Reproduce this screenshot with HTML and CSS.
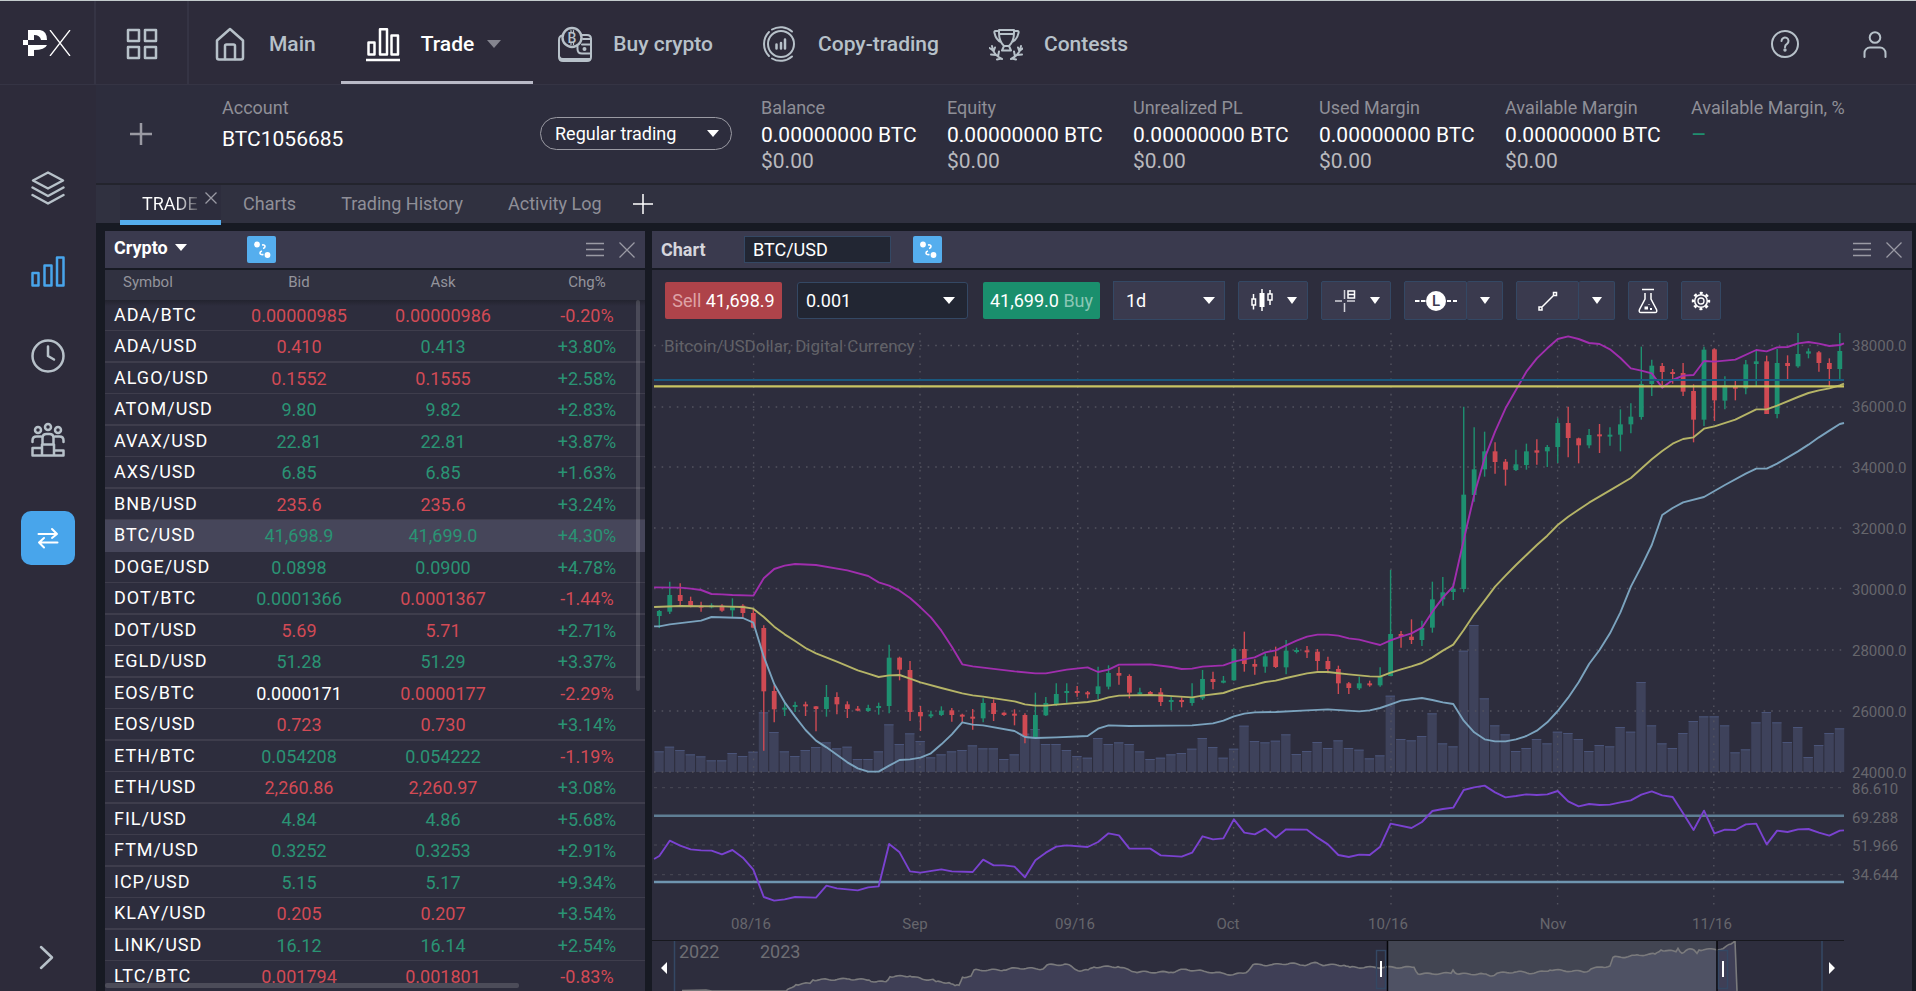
FILE: index.html
```html
<!DOCTYPE html>
<html lang="en">
<head>
<meta charset="utf-8">
<title>BTC/USD – Trade</title>
<link rel="stylesheet" href="styles.css">
</head>
<body>
<header class="topbar">
  <a class="logo" href="#" aria-label="PX home">
    <svg width="48" height="26" viewBox="0 0 48 26"><g fill="#fff"><path d="M5 0H17Q24 1 24 10H18Q17 5 11 5V10H5Z"/><path d="M0 10H5V15H0Z"/><path d="M5 15H24Q22 20 11 20V26H5Z"/></g><path d="M27 0L47 26M47 0L27 26" stroke="#fff" stroke-width="1.3"/></svg>
  </a>
  <button class="apps" aria-label="Applications">
    <svg width="32" height="32" viewBox="0 0 32 32" class="line thick"><path d="M2 2h11v11H2zM19 2h11v11H19zM2 19h11v11H2zM19 19h11v11H19z"/></svg>
  </button>
  <nav class="mainnav">
    <a href="#"><svg width="34" height="36" viewBox="0 0 34 36" class="line thick"><path d="M3 14.500L16 3l13 11.500V31.500a2 2 0 0 1-2 2H5a2 2 0 0 1-2-2Z"/><path d="M11 33V20a1.500 1.500 0 0 1 1.500-1.500h7a1.500 1.500 0 0 1 1.500 1.500v13"/></svg>Main</a>
    <a href="#" class="active"><svg width="34" height="36" viewBox="0 0 34 36" class="line thick"><path d="M2.500 16.500h6v12h-6zM14 3.200h7v25.300h-7zM25.500 9.500h6.500v19h-6.500zM0 34h34"/></svg>Trade<i class="caret big"></i></a>
    <a href="#"><svg width="34" height="36" viewBox="0 0 34 36" class="line"><path d="M4.500 9.500Q1 10 1 14V31q0 4 4 4H29q4 0 4-4V13q0-4-4-4H23M1.500 31q.5 2 3.500 2H32.500"/><path d="M33 27.500H24q-4.500 0-4.500-4.500V20.500M24 18.500H33M25 13H33"/><circle cx="26.500" cy="23" r="1" fill="currentColor"/><circle cx="14" cy="11.500" r="9.500" fill="#2d2b3a" stroke-width="2.400"/><text x="9.500" y="16.500" class="coin">B</text><path d="M13 4.500v2M15.500 4.500v2M13 16.500v2M15.500 16.500v2" stroke-width="1.200"/></svg>Buy crypto</a>
    <a href="#"><svg width="34" height="38" viewBox="0 0 34 38" class="line"><circle cx="18" cy="19" r="13"/><path d="M9 4.500A17 17 0 0 1 29 6.500M29 31.500A17 17 0 0 1 9 33.500M6 7a17 17 0 0 0 0 24"/><path d="M13.500 19.500v4M18 18v5.500M22 14.500v9" stroke-width="2.500"/></svg>Copy-trading</a>
    <a href="#"><svg width="34" height="36" viewBox="0 0 34 36" class="line"><path d="M10 4H25V7q0 8-5 13H15q-5-5-5-13ZM10 8H25M10 5H6.500Q5 5 5.500 7Q7 14 12 16M25 5H28.500Q30 5 29.500 7Q28 14 23 16M15 20l-2 4.500H22l-2-4.500"/><path d="M3 20Q4 29 13 33M32 20Q31 29 22 33M0.500 22l3.500 2.500M6 21.500l-1.500 4M2 28.500l5 .500M10 25.500l-1 5M8 33.500l4-1M34.500 22L31 24.500M29 21.500l1.500 4M33 28.500l-5 .500M25 25.500l1 5M27 33.500l-4-1"/></svg>Contests</a>
  </nav>
  <div class="toolsright">
    <button aria-label="Help"><svg width="30" height="30" viewBox="0 0 30 30" class="line"><circle cx="15" cy="15" r="13"/><path d="M11.500 12a3.500 3.500 0 1 1 5.500 2.900q-2 1.300-2 3.300"/><circle cx="15" cy="21" r=".7" fill="currentColor"/></svg></button>
    <button aria-label="Profile"><svg width="30" height="30" viewBox="0 0 30 30" class="line"><circle cx="15" cy="8.500" r="5.300"/><path d="M4.500 28V24a5.500 5.500 0 0 1 5.500-5.500H20a5.500 5.500 0 0 1 5.500 5.500v4"/></svg></button>
  </div>
</header>

<div class="layout">
  <aside class="sidebar">
    <button aria-label="Markets"><svg width="36" height="36" viewBox="0 0 36 36" class="line thick"><path d="M18 2.500L33 10.500 18 18.500 3 10.500ZM2.500 17.500L18 26l15.500-8.500M2.500 25L18 33.500 33.500 25"/></svg></button>
    <button aria-label="Trade" class="on"><svg width="36" height="36" viewBox="0 0 36 36" class="line thick"><path d="M2.500 19h6v12.500h-6zM14.500 11.500h7v20h-7zM27 3.500h6.500v28H27z"/></svg></button>
    <button aria-label="History"><svg width="36" height="36" viewBox="0 0 36 36" class="line thick"><circle cx="18" cy="18" r="15.500"/><path d="M18 8.500V18l6 3.500"/></svg></button>
    <button aria-label="Community"><svg width="36" height="36" viewBox="0 0 36 36" class="line thick"><circle cx="18" cy="5" r="3"/><circle cx="8" cy="8" r="3"/><circle cx="28" cy="8" r="3"/><path d="M12.500 21v-5q0-4 4-4h3q4 0 4 4v5M2.500 20v-1.500q0-4 4-4H11M33.500 20v-1.500q0-4-4-4H25M2.500 26H12V33.500H2.500ZM12 22.500H24V33.500H12ZM24 28.500H33.500V33.500H24Z"/></svg></button>
    <button aria-label="Transfer" class="swap"><svg width="24" height="24" viewBox="0 0 24 24" class="line"><path d="M2.500 8H21M16 3l5 5-5 4M21.500 16.500H3M8 12l-5 4.500L8 21.500"/></svg></button>
    <button aria-label="Expand" class="expand"><svg width="36" height="36" viewBox="0 0 36 36" class="line thick"><path d="M11 8l11 10.500L11 29"/></svg></button>
  </aside>

  <main class="content">
    <section class="account">
      <button class="add" aria-label="Add account"><svg width="22" height="22" viewBox="0 0 22 22"><path d="M11 0V22M0 11H22" stroke="#9a9aa3" stroke-width="2.500"/></svg></button>
      <div class="acc-id"><span class="label">Account</span><strong>BTC1056685</strong></div>
      <label class="select pill"><select aria-label="Trading mode"><option>Regular trading</option></select></label>
      <dl class="stats">
        <div><dt>Balance</dt><dd>0.00000000 BTC</dd><dd class="usd">$0.00</dd></div>
        <div><dt>Equity</dt><dd>0.00000000 BTC</dd><dd class="usd">$0.00</dd></div>
        <div><dt>Unrealized PL</dt><dd>0.00000000 BTC</dd><dd class="usd">$0.00</dd></div>
        <div><dt>Used Margin</dt><dd>0.00000000 BTC</dd><dd class="usd">$0.00</dd></div>
        <div><dt>Available Margin</dt><dd>0.00000000 BTC</dd><dd class="usd">$0.00</dd></div>
        <div><dt>Available Margin, %</dt><dd class="dash">–</dd></div>
      </dl>
    </section>

    <nav class="tabs">
      <div class="tab current"><a href="#">TRADE</a><button aria-label="Close tab"><svg width="12" height="12" viewBox="0 0 12 12" class="x"><path d="M0.500 0.500L11.500 11.500M11.500 0.500L0.500 11.500"/></svg></button></div>
      <a class="tab" href="#">Charts</a>
      <a class="tab" href="#">Trading History</a>
      <a class="tab" href="#">Activity Log</a>
      <button class="newtab" aria-label="New tab"><svg width="20" height="20" viewBox="0 0 20 20"><path d="M10 0V20M0 10H20" stroke="#fff" stroke-width="1.500"/></svg></button>
    </nav>

    <div class="workspace">
      <section class="panel quotes">
        <div class="panel-head">
          <button class="group">Crypto<i class="caret"></i></button>
          <button class="link" aria-label="Link panels"><svg width="20" height="20" viewBox="0 0 20 20"><circle cx="5" cy="4.500" r="2.900" fill="#fff"/><circle cx="15.500" cy="15" r="2.900" fill="#fff"/><path d="M10 5Q13 4.500 13 6.500Q13 8 11 8.500M11.500 14.500Q8 15 8 13Q8 11.500 10 11" fill="none" stroke="#fff" stroke-width="1.600"/></svg></button>
          <span class="spacer"></span>
          <button aria-label="Panel menu"><svg width="18" height="16" viewBox="0 0 18 16" class="x"><path d="M0 1.500H18M0 7.500H18M0 13.500H18"/></svg></button>
          <button aria-label="Close panel"><svg width="16" height="16" viewBox="0 0 16 16" class="x"><path d="M0.500 0.500L15.500 15.500M15.500 0.500L0.500 15.500"/></svg></button>
        </div>
        <div class="table-wrap">
          <table>
            <colgroup><col class="c-sym"><col class="c-num"><col class="c-num"><col class="c-num"></colgroup>
            <thead><tr><th>Symbol</th><th>Bid</th><th>Ask</th><th>Chg%</th></tr></thead>
            <tbody>
              <tr><td>ADA/BTC</td><td class="r">0.00000985</td><td class="r">0.00000986</td><td class="r">-0.20%</td></tr>
              <tr><td>ADA/USD</td><td class="r">0.410</td><td class="g">0.413</td><td class="g">+3.80%</td></tr>
              <tr><td>ALGO/USD</td><td class="r">0.1552</td><td class="r">0.1555</td><td class="g">+2.58%</td></tr>
              <tr><td>ATOM/USD</td><td class="g">9.80</td><td class="g">9.82</td><td class="g">+2.83%</td></tr>
              <tr><td>AVAX/USD</td><td class="g">22.81</td><td class="g">22.81</td><td class="g">+3.87%</td></tr>
              <tr><td>AXS/USD</td><td class="g">6.85</td><td class="g">6.85</td><td class="g">+1.63%</td></tr>
              <tr><td>BNB/USD</td><td class="r">235.6</td><td class="r">235.6</td><td class="g">+3.24%</td></tr>
              <tr class="selected"><td>BTC/USD</td><td class="g">41,698.9</td><td class="g">41,699.0</td><td class="g">+4.30%</td></tr>
              <tr><td>DOGE/USD</td><td class="g">0.0898</td><td class="g">0.0900</td><td class="g">+4.78%</td></tr>
              <tr><td>DOT/BTC</td><td class="g">0.0001366</td><td class="r">0.0001367</td><td class="r">-1.44%</td></tr>
              <tr><td>DOT/USD</td><td class="r">5.69</td><td class="r">5.71</td><td class="g">+2.71%</td></tr>
              <tr><td>EGLD/USD</td><td class="g">51.28</td><td class="g">51.29</td><td class="g">+3.37%</td></tr>
              <tr><td>EOS/BTC</td><td>0.0000171</td><td class="r">0.0000177</td><td class="r">-2.29%</td></tr>
              <tr><td>EOS/USD</td><td class="r">0.723</td><td class="r">0.730</td><td class="g">+3.14%</td></tr>
              <tr><td>ETH/BTC</td><td class="g">0.054208</td><td class="g">0.054222</td><td class="r">-1.19%</td></tr>
              <tr><td>ETH/USD</td><td class="r">2,260.86</td><td class="r">2,260.97</td><td class="g">+3.08%</td></tr>
              <tr><td>FIL/USD</td><td class="g">4.84</td><td class="g">4.86</td><td class="g">+5.68%</td></tr>
              <tr><td>FTM/USD</td><td class="g">0.3252</td><td class="g">0.3253</td><td class="g">+2.91%</td></tr>
              <tr><td>ICP/USD</td><td class="g">5.15</td><td class="g">5.17</td><td class="g">+9.34%</td></tr>
              <tr><td>KLAY/USD</td><td class="r">0.205</td><td class="r">0.207</td><td class="g">+3.54%</td></tr>
              <tr><td>LINK/USD</td><td class="g">16.12</td><td class="g">16.14</td><td class="g">+2.54%</td></tr>
              <tr><td>LTC/BTC</td><td class="r">0.001794</td><td class="r">0.001801</td><td class="r">-0.83%</td></tr>
            </tbody>
          </table>
          <div class="thumb-v"></div>
          <div class="thumb-h"></div>
        </div>
      </section>

      <section class="panel chart">
        <div class="panel-head">
          <h2>Chart</h2>
          <input class="symbol" type="text" value="BTC/USD" aria-label="Instrument">
          <button class="link" aria-label="Link panels"><svg width="20" height="20" viewBox="0 0 20 20"><circle cx="5" cy="4.500" r="2.900" fill="#fff"/><circle cx="15.500" cy="15" r="2.900" fill="#fff"/><path d="M10 5Q13 4.500 13 6.500Q13 8 11 8.500M11.500 14.500Q8 15 8 13Q8 11.500 10 11" fill="none" stroke="#fff" stroke-width="1.600"/></svg></button>
          <span class="spacer"></span>
          <button aria-label="Panel menu"><svg width="18" height="16" viewBox="0 0 18 16" class="x"><path d="M0 1.500H18M0 7.500H18M0 13.500H18"/></svg></button>
          <button aria-label="Close panel"><svg width="16" height="16" viewBox="0 0 16 16" class="x"><path d="M0.500 0.500L15.500 15.500M15.500 0.500L0.500 15.500"/></svg></button>
        </div>
        <div class="toolbar">
          <div class="deal">
            <button class="sell"><span>Sell</span> 41,698.9</button>
            <label class="select qty"><select aria-label="Quantity"><option>0.001</option></select></label>
            <button class="buy">41,699.0 <span>Buy</span></button>
          </div>
          <label class="select period"><select aria-label="Period"><option>1d</option></select></label>
          <button class="tool wide" aria-label="Chart type"><svg width="24" height="24" viewBox="0 0 24 24"><path d="M3.500 5V20.500M20 1V16" stroke="#fff" stroke-width="1.500"/><path d="M2 10h3.500v6H2zM18 5h4v6h-4z" fill="#3a3a4e" stroke="#fff" stroke-width="1.500"/><path d="M12 0V22" stroke="#fff" stroke-width="1.500"/><path d="M9.500 4h5v14h-5z" fill="#fff"/></svg><i class="caret"></i></button>
          <button class="tool wide" aria-label="Crosshair"><svg width="24" height="24" viewBox="0 0 24 24"><path d="M11.500 1V10M11.500 14V23M2 12H9M14 12H22" stroke="#d3d3da" stroke-width="1.500"/><path d="M15 2h6.500v7H15zM15 5.500h6" fill="none" stroke="#fff" stroke-width="1.500"/></svg><i class="caret"></i></button>
          <div class="split">
            <button class="tool" aria-label="Limit order"><svg width="42" height="20" viewBox="0 0 42 20"><path d="M0 10H4.500M6 10H10.500M32 10H36M38 10H42" stroke="#fff" stroke-width="1.800"/><circle cx="21" cy="10" r="10" fill="#fff"/><text x="17" y="15" class="limit">L</text></svg></button>
            <button class="tool more" aria-label="Order types"><i class="caret"></i></button>
          </div>
          <div class="split">
            <button class="tool" aria-label="Trend line"><svg width="20" height="20" viewBox="0 0 20 20" fill="none" stroke="#fff" stroke-width="1.500"><path d="M3.500 16.500L15.500 4.500M1 16h3v3H1zM15.500 1.500h3v3h-3z"/></svg></button>
            <button class="tool more" aria-label="Drawing tools"><i class="caret"></i></button>
          </div>
          <button class="tool" aria-label="Studies"><svg width="22" height="26" viewBox="0 0 22 26" fill="none" stroke="#fff" stroke-width="1.500"><path d="M5 1.500H17M8 5V11L2.500 21.500Q1.500 24.500 4 24.500H18Q20.500 24.500 19.500 21.500L14 11V5"/><path d="M7.500 18.500h3.500v3H7.500zM13 20h2v2h-2zM11.500 16h1v1h-1z" fill="#fff" stroke="none"/></svg></button>
          <button class="tool" aria-label="Settings"><svg width="20" height="20" viewBox="0 0 20 20" fill="none" stroke="#fff"><circle cx="10" cy="10" r="6.300" stroke-width="1.500"/><circle cx="10" cy="10" r="3" stroke-width="1.300"/><circle cx="10" cy="10" r="8" stroke-width="2.400" stroke-dasharray="3 3.283" stroke-dashoffset="1.500"/></svg></button>
        </div>
        <svg id="plot" class="plot" viewBox="652 320 1260 620" role="img" aria-label="Bitcoin/USDollar daily chart"></svg>
        <svg id="navigator" class="plot" viewBox="652 940 1260 51" role="img" aria-label="Chart range"></svg>
      </section>
    </div>
  </main>
</div>
<script src="chart.js"></script>
</body>
</html>
```

FILE: styles.css
```css
* { box-sizing: border-box; }
html, body { height: 100%; }
body {
  margin: 0;
  display: flex;
  flex-direction: column;
  overflow: hidden;
  background: #2d2b3a;
  border-top: 1px solid #c3cbcc;
  color: #fff;
  font: 18px/24px Roboto, "Liberation Sans", sans-serif;
}
a { color: inherit; text-decoration: none; }
button, select, input { font: inherit; color: inherit; margin: 0; padding: 0; border: 0; background: none; border-radius: 0; outline: 0; }
button { display: flex; align-items: center; justify-content: center; cursor: pointer; }
svg { display: block; flex: none; }
.line { fill: none; stroke: currentColor; stroke-width: 2; stroke-linecap: round; stroke-linejoin: round; }
.line.thick { stroke-width: 2.5; }
.x { stroke: #9a9aa4; stroke-width: 1.3; fill: none; }
.caret { width: 0; height: 0; border: 5px solid transparent; border-top: 7px solid #fff; border-bottom: 0; }
.caret.big { border-width: 8px 7px 0; border-top-color: #85858f; margin-left: -8px; margin-right: 7px; }
.coin { fill: currentColor; stroke: none; font: 500 14px Roboto, sans-serif; }
.limit { fill: #3a3a4e; stroke: none; font: 500 15px Roboto, sans-serif; }
.spacer { flex: 1; }

/* top bar */
.topbar { display: flex; height: 84px; flex: none; border-bottom: 1px solid #353444; color: #b7c1c9; }
.logo, .apps { width: 96px; border-right: 2px solid #353444; display: flex; align-items: center; justify-content: center; }
.apps { width: 93px; padding-top: 2px; }
.mainnav { display: flex; flex: 1; }
.mainnav a { display: flex; align-items: center; gap: 21px; padding: 6px 25px 0; font-size: 21px; font-weight: 500; border-bottom: 3px solid transparent; }
.mainnav a.active { color: #fff; border-color: #b9bac7; }
.toolsright { display: flex; gap: 60px; padding: 2px 26px 0 0; }

.layout { display: flex; flex: 1; min-height: 0; }
.sidebar { width: 96px; flex: none; display: flex; flex-direction: column; align-items: center; gap: 48px; padding: 85px 0 16px; color: #b7c1c9; }
.sidebar .on { color: #48a5eb; }
.sidebar .swap { width: 54px; height: 54px; border-radius: 10px; background: #48a5eb; color: #fff; margin-top: 5px; }
.sidebar .expand { margin-top: auto; }

.content { flex: 1; min-width: 0; display: flex; flex-direction: column; }
.account { display: flex; align-items: flex-start; height: 100px; flex: none; background: #2d2d3d; border-bottom: 2px solid #23242d; padding: 11px 42px 0 34px; }
.add { padding-top: 27px; width: 22px; }
.acc-id { display: flex; flex-direction: column; width: 318px; margin-left: 70px; }
.acc-id strong { font-size: 21px; font-weight: 400; margin-top: 7px; }
.label, .stats dt { color: #8f8f97; font-size: 18px; }
.select { position: relative; display: flex; }
.select select { appearance: none; width: 100%; height: 100%; }
.select::after { content: ""; position: absolute; right: 12px; top: calc(50% - 4px); border: 6px solid transparent; border-top: 7px solid #fff; border-bottom: 0; pointer-events: none; }
.pill { width: 192px; height: 33px; margin-top: 21px; border: 1px solid #9a9aa3; border-radius: 17px; }
.pill select { padding-left: 14px; }
.stats { flex: 1; display: grid; grid-template-columns: repeat(5, 186px) auto; margin: 0 0 0 29px; }
.stats dt { white-space: nowrap; }
.stats dd { margin: 0; font-size: 21px; line-height: 26px; }
.stats dt + dd { margin-top: 2px; }
.stats .usd { color: #b9b9be; }
.stats .dash { color: #1f8f6f; font-size: 24px; }

.tabs { display: flex; height: 38px; flex: none; background: #303140; padding-left: 24px; color: #8f8f98; }
.tab { display: flex; align-items: center; padding: 0 23px 0 22px; }
.tab.current { width: 101px; height: 40px; padding: 0 4px 0 22px; color: #fff; background: #2d2d3d; border-bottom: 5px solid #55aeee; z-index: 1; gap: 7px; }
.tab.current a { padding-top: 2px; background: linear-gradient(90deg, #fff 60%, #55555f); background-clip: text; color: transparent; }
.tab.current button { padding-bottom: 10px; }
.newtab { margin-left: 8px; }

/* panels */
.workspace { flex: 1; min-height: 0; display: flex; gap: 7px; background: #171a23; padding: 8px 4px 0 9px; }
.panel { display: flex; flex-direction: column; min-width: 0; background: #2d2d3d; overflow: hidden; }
.quotes { width: 540px; flex: none; }
.chart { flex: 1; }
.panel-head { display: flex; align-items: center; height: 39px; flex: none; padding: 0 10px 0 9px; background: #3a3a4e; border-bottom: 2px solid #171a23; }
.panel-head button + button { margin-left: 15px; }
.panel-head .group { width: 133px; font-weight: 700; gap: 7px; justify-content: flex-start; padding-bottom: 4px; }
.panel-head .group .caret { border-width: 7px 6px 0; }
.panel-head .link { width: 29px; height: 27px; margin: 0; border-radius: 2px; background: #55aeee; }
.panel-head h2 { margin: 0; font-size: 18px; font-weight: 700; color: #d6d6dd; width: 83px; }
.symbol { width: 147px; height: 27px; background: #222633; border: 1px solid #344864; padding: 0 8px; margin-right: 22px; }

.table-wrap { position: relative; flex: 1; min-height: 0; overflow: hidden; }
table { width: 554px; border-collapse: separate; border-spacing: 0; table-layout: fixed; }
.c-sym { width: 122px; }
.c-num { width: 144px; }
th { height: 30px; padding: 0 0 6px; font-size: 15px; font-weight: 400; line-height: 24px; color: #94949c; background: #303140; }
th:first-child { text-align: left; padding-left: 18px; }
td { height: 31px; padding: 1px 0 0; text-align: center; line-height: 24px; border-bottom: 1px solid #3e3d4c; }
tbody tr:first-child td { background: linear-gradient(#23242f, #2d2d3d 6px); }
tr:nth-child(even) td { height: 32px; border-bottom-width: 2px; }
td:first-child { text-align: left; padding: 0 0 0 9px; letter-spacing: 1px; }
.selected td { background: #46465a; border-color: #46465a; }
.r { color: #d24a55; }
.g { color: #2a9374; }
.thumb-v { position: absolute; right: 5px; top: 30px; width: 4px; height: 391px; background: #ffffff24; border-radius: 2px; }
.thumb-h { position: absolute; left: 0; bottom: 3px; width: 414px; height: 5px; background: #4c4c59; border-radius: 2px; }

.toolbar { display: flex; align-items: center; gap: 13px; height: 50px; padding: 11px 13px 0; flex: none; }
.toolbar > *, .split > * { flex: none; }
.deal { display: flex; gap: 15px; }
.sell, .buy { width: 117px; height: 37px; border-radius: 2px; white-space: pre; }
.sell { background: #ae434a; }
.buy { background: #1a8f6d; }
.sell span { color: #dea2a6; }
.buy span { color: #8ac6b5; }
.qty { width: 171px; height: 37px; background: #222633; border: 1px solid #344864; border-radius: 3px; }
.qty select { padding-left: 8px; }
.period { width: 112px; height: 39px; background: #3a3a4e; border: 1px solid #344864; }
.period select { padding-left: 12px; }
.period::after { right: 9px; }
.tool { width: 40px; height: 39px; background: #3a3a4e; border: 1px solid #344864; border-radius: 2px; }
.tool.wide { width: 70px; gap: 13px; }
.split { display: flex; }
.split .tool { width: 63px; }
.split .more { width: 36px; border-left: 0; }
.plot { width: 100%; height: auto; }
.axis { fill: #66666c; font: 15px Roboto, sans-serif; }
.caption { fill: #626268; font: 17px Roboto, sans-serif; }
.year { fill: #6e6e74; font: 18px Roboto, sans-serif; }
```

FILE: chart.js
```js
const NS = "http://www.w3.org/2000/svg";
const STEP = 10.447, FIRST = 659.3, LEFT = 654, RIGHT = 1844, BASE = 772;
const xAt = i => Math.min(RIGHT, Math.max(LEFT, FIRST + i * STEP));

function add(parent, tag, attrs, text) {
  const el = document.createElementNS(NS, tag);
  for (const k in attrs) el.setAttribute(k, attrs[k]);
  if (text) el.textContent = text;
  parent.appendChild(el);
  return el;
}

// Each segment: [origin, values], values in thirds of a unit below the origin.
const candles = [
  [540, 0, `g 210 264 213 228,g 125 222 165 215,r 130 200 165 183,r 170 202 183 200,r 185 215 197 201,g 190 205 196 202,r 193 215 197 212,g 175 232 198 211,r 193 236 197 219,r 205 265 219 263,
r 256 632 264 454,r 436 547 453 508,g 485 528 503 507,g 485 516 495 501,r 485 528 493 498,r 498 574 499 507,g 435 530 471 507,r 457 523 471 493,r 484 534 493 507,r 498 514 506 511,
g 494 515 504 513,g 488 524 498 503,g 314 520 353 498,r 350 421 353 389,r 363 543 390 516,r 498 573 516 529,g 512 534 523 528,g 499 528 512 525,r 504 545 511 525,r 521 547 524 529,
r 507 569 530 534,g 475 547 489 535,r 478 543 489 522,r 517 528 518 525,r 508 556 521 525,r 520 610 525 590,g 458 594 525 592,g 471 528 489 526,g 430 498 462 493,g 430 488 453 459,
r 438 470 453 457,r 453 475 457 461,g 380 477 439 462,g 376 448 399 440,r 380 434 399 407,r 403 475 408 458,g 443 466 457 463,r 453 466 456 463,r 444 498 457 486,g 470 511 480 484,
r 472 502 480 486,g 430 497 471 489,g 390 480 417 475,r 395 448 417 426,g 408 430 422 427,g 323 422 327 421,r 275 395 327 372,r 358 404 372 380,g 340 398 349 380,r 320 384 349 381`],
  [600, 60, `g 120 223 152 202,g 143 160 150 156,r 138 174 151 157,r 147 212 155 183,r 170 220 183 207,r 197 282 207 250,r 246 282 250 264,g 230 270 250 265,r 242 260 250 255,g 202 260 230 256,
g -90 228 102 228,r 93 143 102 111,r 58 132 110 120,g 62 138 84 120`],
  [225, 74, `g 1070 1223 1123 1208,g 1056 1142 1102 1123,g 1075 1125 1091 1101,g 545 1102 809 1092,g 607 830 733 810,g 620 755 679 733,
r 652 746 679 711,r 702 782 710 734,g 674 738 718 735,g 656 734 679 720,r 643 719 676 683,g 660 726 666 679,g 580 714 594 666,r 545 697 594 639,r 638 715 640 661,g 612 670 630 661,
r 597 684 628 634,g 607 662 629 634,g 553 679 598 629,g 535 625 575 598,g 365 584 477 576,g 404 513 422 477,r 414 480 423 441,r 432 476 441 447,r 414 513 444 500,r 478 652 498 584,
g 365 603 374 584,r 370 588 373 526,g 454 553 481 527,r 463 526 484 491,g 405 508 418 490,g 375 485 409 417,r 392 567 409 567,g 372 580 414 567,r 391 462 414 423,g 324 428 387 424,
g 370 400 379 386,r 378 440 382 414,r 400 485 414 432,g 324 462 378 432`]
];
const volume = [62,76,66,53,47,35,35,57,48,61,179,120,62,48,66,75,89,71,76,39,39,62,143,84,116,93,44,53,62,66,80,71,71,39,53,115,129,84,84,66,48,43,102,84,89,84,62,39,43,53,57,70,102,75,43,70,139,93,89,
94,113,54,63,90,72,95,72,67,41,50,229,99,95,108,176,86,77,364,441,221,140,113,63,72,99,86,121,117,99,63,81,77,135,121,270,140,86,72,117,153,167,167,140,59,68,149,180,149,90,135,45,81,117,131];

const lines = {
  "#a02eae": [
    [540, "-.5:142 2:143 3:146 4:150 5:162 6:163 7:165 9:167 10:115 11:87 12:77 13:72 15:75 18:91 20:108 21:127 22:137 23:152 24:174 25:202 26:232 27:272 28:320 29:373 30:379 34:394 36:400 37:400 39:389 41:382 42:396 43:389 44:374 47:373 49:381 50:387 51:386 52:380 54:376 55:365 56:358 57:352 58:337 59:331"],
    [600, "60:136 61:122 62:110 63:104 64:104 65:107 66:115 67:119 68:127 69:135 70:121 71:110 72:100 73:83"],
    [225, "74:1160 75:1118 76:1084 77:945 78:810 79:700 80:620 81:550 82:495 83:440 84:400 85:370 86:342 87:334 88:342 89:354 90:357 91:373 92:399 93:430 94:437 95:445 96:488 97:465 98:452 99:450 100:408 101:410 103:404 105:375 106:379 107:367 108:366 109:355 110:351 111:356 112:363 113:360 113.5:355"]],
  "#b5b467": [
    [540, "-.5:201 2:198 6:199 8:201 9:206 10:231 11:260 12:283 13:303 14:324 15:340 17:365 19:391 20:401 21:411 22:406 23:405 24:416 25:427 27:444 29:460 30:466 31:470 34:484 35:493 36:497 37:497 38:494 41:486 42:481 43:472 44:467 47:465 48:466 51:472 52:467 54:459 55:448 56:440 57:434 58:426 59:422"],
    [600, "60:234 62:220 63:216 64:216 66:223 68:229 69:230 70:218 71:208 72:199 73:189 74:172 75:152 76:134 77:90 78:43"],
    [225, "79:1127 80:1085 81:1052 82:1020 83:990 84:960 85:932 86:900 87:875 89:833 91:796 93:759 95:703 96:678 97:656 98:642 99:637 100:611 101:604 103:584 105:553 106:553 107:542 109:516 110:504 111:496 112:490 113:481 113.5:476"]],
  "#7ba3be": [
    [540, "-.5:259 0:259 1:253 4:242 5:231 8:234 9:248 10:350 11:432 12:487 13:530 14:570 15:602 16:622 17:644 18:667 19:685 20:695 21:695 22:677 23:660 24:658 25:653 26:640 27:613 28:583 29:547 30:554 31:556 34:573 35:591 36:594 38:592 41:588 42:566 43:556 45:558 51:556 53:550 54:542 55:529 56:521 57:517"],
    [600, "59:336 62:331 64:328 67:334 68:331 69:324 70:313 71:302 73:294 74:300 75:307 76:312 77:362 78:397 79:418 80:424 81:424 82:418 83:408 84:392 85:367 86:333 87:293 88:247 89:192 90:150 91:100"],
    [225, "92:1162 93:1085 94:1025 95:960 96:870 97:849 98:832 100:816 102:780 104:746 105:731 106:731 107:716 109:679 110:659 111:637 112:617 113:597 113.5:594"]],
  "#7a42d0": [
    [540, "-.5:957 0:948 1:902 2:917 3:928 4:931 5:932 6:943 7:930 8:953 9:989 10:1071 11:1082 12:1078 13:1071 15:1073 16:1037 17:1045 19:1051 20:1042 21:1039 22:912 23:937 24:994 25:998 27:988 28:994 30:996 31:959 32:976 33:976 34:980 35:1012 36:961 37:938 38:920 39:916 41:921 42:906 43:880 44:886 45:926 47:926 48:946 50:950 51:938 52:889 53:898 54:895 55:838 56:878 57:883 58:866"],
    [600, "59:713 60:688 62:689 63:713 64:733 65:765 66:771 67:764 68:765 69:740 70:671 72:684 73:666 74:633 75:627 76:623 77:570 78:562 79:557 80:577 81:592 82:588 83:583 84:585 85:583 86:573 87:604 88:619 89:612 90:615 91:614 92:607 93:601 94:584 95:574 96:586 97:591 98:640 99:690 100:632 101:700 102:689 103:690 104:673 105:671 106:733 107:692 108:696 109:688 110:687 111:698 112:707 113:692 113.5:691"]]
};

const plot = document.getElementById("plot");

volume.forEach((v, i) => {
  const y = BASE - v / 3, x = FIRST + i * STEP - 5;
  add(plot, "rect", { x, y, width: 9.4, height: v / 3, fill: "#3e425b" });
  add(plot, "rect", { x, y, width: 9.4, height: 1, fill: "#4a5479" });
});

const grid = { stroke: "#53535f", "stroke-width": 1.4, "stroke-dasharray": "1.6 6" };
for (const x of [753.6, 920, 1077.7, 1233.6, 1391, 1557.6, 1713.8]) add(plot, "line", { x1: x, x2: x, y1: 333, y2: 910, ...grid });
for (const y of [345.5, 407, 467, 528, 588.5, 650, 711, 772]) add(plot, "line", { x1: LEFT, x2: RIGHT, y1: y, y2: y, ...grid });
for (const y of [787.7, 845, 874.7]) add(plot, "line", { x1: LEFT, x2: RIGHT, y1: y, y2: y, stroke: "#4a4a57", "stroke-dasharray": "3 5" });

for (const [origin, start, data] of candles) {
  data.split(",").forEach((row, n) => {
    const [dir, ...v] = row.trim().split(" ");
    const [hi, lo, top, bottom] = v.map(t => origin + t / 3);
    const x = FIRST + (start + n) * STEP, color = dir === "g" ? "#1e9070" : "#cf4a53";
    add(plot, "line", { x1: x, x2: x, y1: hi, y2: lo, stroke: color, "stroke-width": 1.4 });
    add(plot, "rect", { x: x - 2.4, y: top, width: 4.8, height: Math.max(2, bottom - top), fill: color });
  });
}

const level = (y, color, w) => add(plot, "line", { x1: LEFT, x2: RIGHT, y1: y, y2: y, stroke: color, "stroke-width": w });
level(815.7, "#5f7e94", 2.6);
level(882, "#6f95b0", 2.4);
for (const color in lines) {
  const points = lines[color].flatMap(([origin, data]) => data.split(" ").map(p => {
    const [i, v] = p.split(":").map(Number);
    return xAt(i) + "," + (origin + v / 3);
  }));
  add(plot, "polyline", { points: points.join(" "), fill: "none", stroke: color, "stroke-width": 1.9, "stroke-linejoin": "round" });
}
level(380, "#19587e", 2);
level(386.3, "#c9c462", 2.3);

add(plot, "text", { x: 664, y: 352, class: "caption" }, "Bitcoin/USDollar, Digital Currency");
const prices = [[345, "38000.0"], [406, "36000.0"], [467, "34000.0"], [528, "32000.0"], [589, "30000.0"], [650, "28000.0"], [711, "26000.0"], [772, "24000.0"], [788, "86.610"], [817, "69.288"], [845, "51.966"], [874, "34.644"]];
for (const [y, t] of prices) add(plot, "text", { x: 1852, y: y + 6, class: "axis" }, t);
const dates = [[751, "08/16"], [915, "Sep"], [1075, "09/16"], [1228, "Oct"], [1388, "10/16"], [1553, "Nov"], [1712, "11/16"]];
for (const [x, t] of dates) add(plot, "text", { x, y: 929, "text-anchor": "middle", class: "axis" }, t);

/* range navigator */
const nav = document.getElementById("navigator");
const profile = [[682, 990.5], [706, 990], [712, 991], [786, 991], [796, 984.7], [810, 983.3], [813, 980], [849, 979], [869, 980], [874, 982], [886, 981.7], [890, 976.7], [910, 976], [922.5, 979.3], [933, 979.3], [936, 981.7], [949, 982.7], [955, 985.7], [959, 985.3], [962.5, 977.3], [971, 976], [974, 970], [1004, 970], [1016, 968], [1043, 969], [1047, 965], [1067, 964.3], [1078, 970.7], [1088, 970], [1094, 967], [1118, 966.7], [1135, 972], [1171, 972.3], [1184, 969.3], [1204, 971.3], [1233, 974.7], [1246, 972.7], [1253, 964.7], [1270, 965], [1290, 963.3], [1303, 965.3], [1317, 962.7], [1321, 964.7], [1344, 965.3], [1350, 967.3], [1414, 967.3], [1418, 974], [1451, 973.3], [1453, 970], [1457, 974], [1484, 974], [1492, 976], [1497, 973.3], [1517, 971.7], [1534, 973.3], [1550, 970], [1587, 971.7], [1591, 969], [1602, 967], [1610, 966], [1613, 957.3], [1628, 956.7], [1635, 955.3], [1655, 954], [1661, 950], [1676, 951.7], [1678, 948.3], [1682, 953.3], [1688, 949.3], [1694, 950], [1697, 953.3], [1699, 950], [1723, 948.7], [1731, 944], [1735, 941]];
const dense = [];
profile.forEach(([x, y], i) => {
  dense.push([x, y]);
  const next = profile[i + 1];
  if (!next || x < 786) return;
  for (let s = x + 2; s < next[0] - 1; s += 2) {
    const t = (s - x) / (next[0] - x);
    dense.push([s, y + (next[1] - y) * t + Math.sin(s * 12.9) * 0.8]);
  }
});
const path = dense.map(p => p[0] + " " + p[1].toFixed(1)).join("L");
add(nav, "path", { d: `M${path}L1737 991H682Z`, fill: "#3f3f56" });
add(nav, "rect", { x: 1388, y: 941, width: 329, height: 50, fill: "#808a90", "fill-opacity": 0.26 });
add(nav, "path", { d: `M${path}L1737 991`, fill: "none", stroke: "#7a7a7c", "stroke-width": 1.6 });
add(nav, "path", { d: "M652 940.500H1844", stroke: "#17181e" });
add(nav, "path", { d: "M1387.500 941V991M1717 941V991", stroke: "#06060a", "stroke-width": 1.5 });
add(nav, "path", { d: "M674.500 941V991M1822 941V991", stroke: "#344864", "stroke-width": 1.5 });
for (const x of [1376.5, 1718.5]) {
  add(nav, "rect", { x, y: 950.5, width: 9, height: 38, fill: "none", stroke: "#344864", "stroke-width": 1.4 });
  add(nav, "rect", { x: x + 3.5, y: 961, width: 2, height: 16, fill: "#fff" });
}
add(nav, "path", { d: "M667 962V974L661 968ZM1829 962V974L1835 968Z", fill: "#fff" });
add(nav, "text", { x: 679, y: 958, class: "year" }, "2022");
add(nav, "text", { x: 760, y: 958, class: "year" }, "2023");
```
